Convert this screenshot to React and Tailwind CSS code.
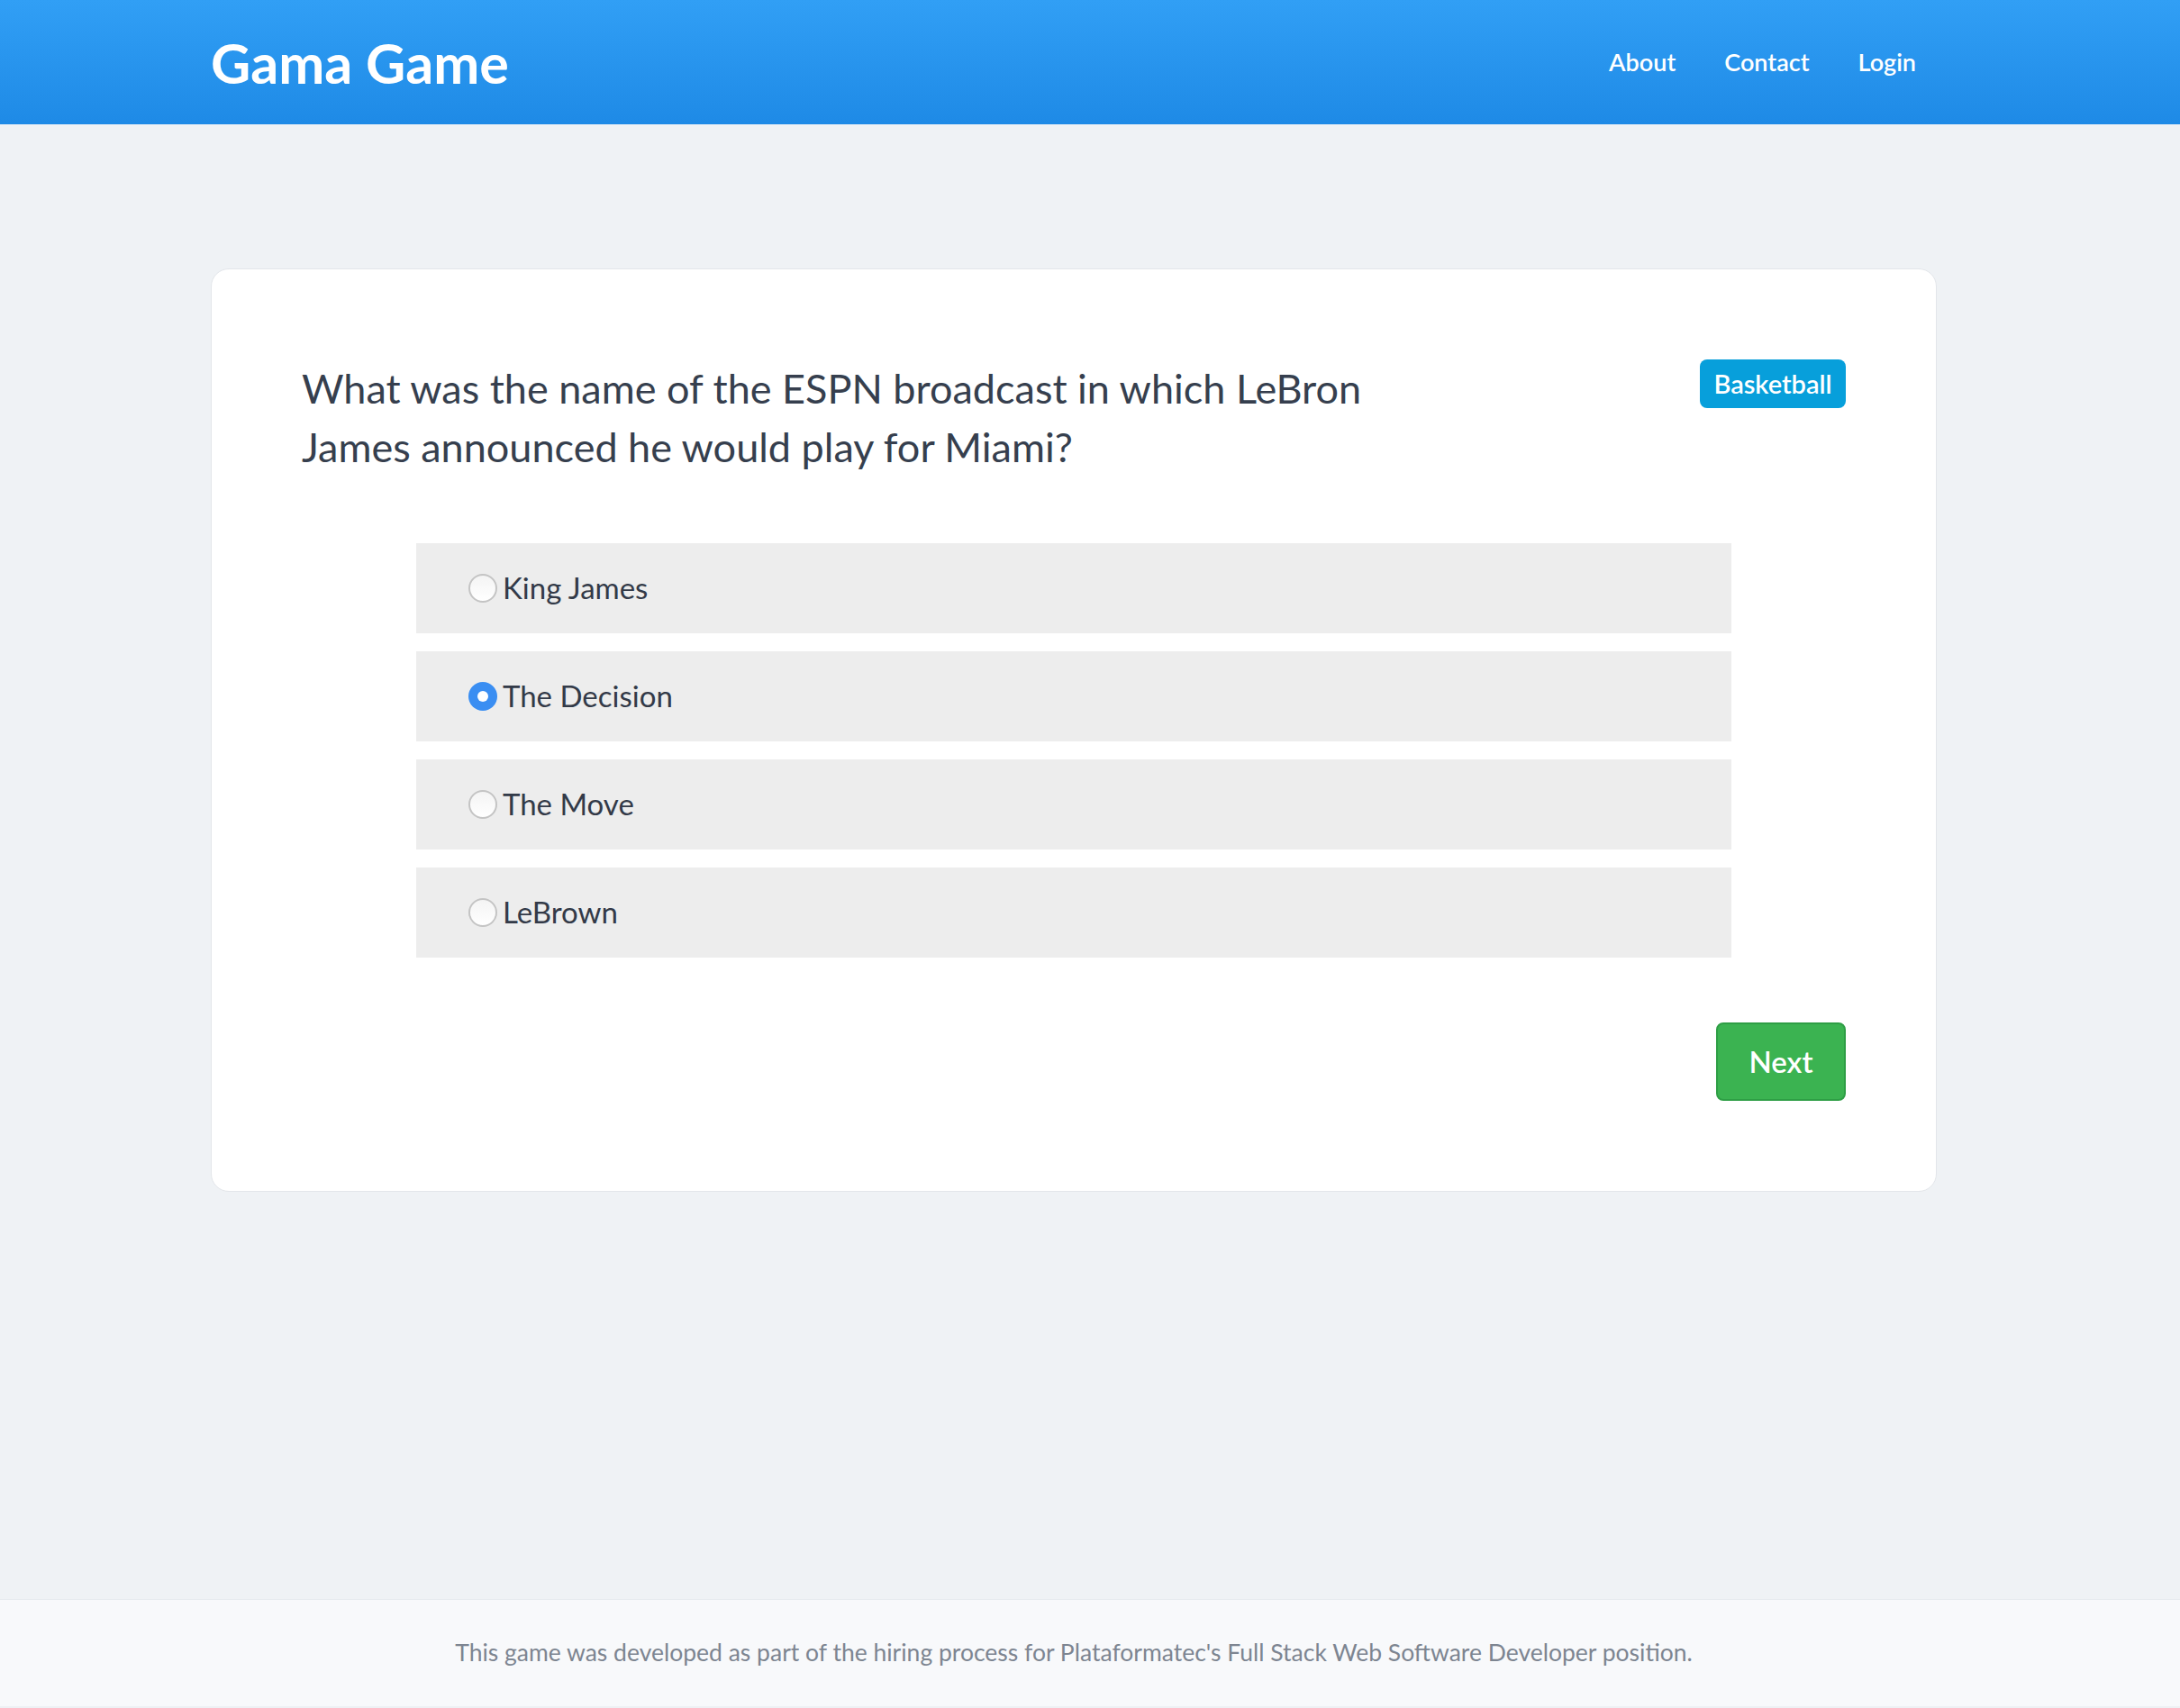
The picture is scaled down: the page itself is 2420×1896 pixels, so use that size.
import React from 'react';

const answers = ['King James', 'The Decision', 'The Move', 'LeBrown'];

const Radio = ({ checked }) =>
  checked ? (
    <span className="flex h-[32px] w-[32px] shrink-0 items-center justify-center rounded-full bg-[#3a8ef2]">
      <span className="h-[12px] w-[12px] rounded-full bg-white" />
    </span>
  ) : (
    <span className="h-[32px] w-[32px] shrink-0 rounded-full border-2 border-[#c4c4c4] bg-gradient-to-b from-[#f4f4f4] to-white" />
  );

const App = () => {
  const selected = 'The Decision';

  return (
    <div className="flex min-h-screen flex-col bg-[#eff2f5] font-['Lato','Noto_Sans',sans-serif]">
      <header className="h-[138px] bg-gradient-to-b from-[#319ff5] to-[#1e8ae6]">
        <div className="pr-[36px]">
          <div className="mx-auto flex h-[138px] w-[1916px] items-center justify-between">
            <a href="#" className="text-[61px] font-bold leading-none text-white">Gama Game</a>
            <nav className="flex items-center">
              <a href="#" className="px-[27px] text-[27px] font-semibold text-white">About</a>
              <a href="#" className="px-[27px] text-[27px] font-semibold text-white">Contact</a>
              <a href="#" className="pl-[27px] pr-[23px] text-[27px] font-semibold text-white">Login</a>
            </nav>
          </div>
        </div>
      </header>

      <main className="flex-1 pr-[36px] pt-[160px]">
        <div className="mx-auto w-[1916px] rounded-[20px] border border-[#e3e6ea] bg-white p-[100px]">
          <div className="flex items-start justify-between">
            <h3 className="text-[45px] leading-[65px] text-[#363f4e]">
              What was the name of the ESPN broadcast in which LeBron
              <br />
              James announced he would play for Miami?
            </h3>
            <span className="flex h-[54px] w-[162px] items-center justify-center rounded-[8px] bg-[#079fdb] text-[29px] font-semibold text-white">
              Basketball
            </span>
          </div>

          <div className="mx-auto mt-[74px] flex w-[1460px] flex-col gap-[20px]">
            {answers.map((a) => (
              <label key={a} className="flex h-[100px] items-center gap-[6px] bg-[#ededed] pl-[58px] text-[33px] text-[#333a48]">
                <Radio checked={a === selected} />
                <span>{a}</span>
              </label>
            ))}
          </div>

          <div className="mt-[72px] flex justify-end">
            <button className="flex h-[87px] w-[144px] items-center justify-center rounded-[8px] border-2 border-[#2e9e45] bg-[#3bb351] text-[33px] font-semibold text-white">
              Next
            </button>
          </div>
        </div>
      </main>

      <footer className="h-[121px] border-t border-[#e6eaee] border-b-2 border-b-[#eef1f4] bg-[#f8f9fb] pr-[36px]">
        <p className="flex h-full items-center justify-center text-[26.5px] text-[#7d8591]">
          This game was developed as part of the hiring process for Plataformatec's Full Stack Web Software Developer position.
        </p>
      </footer>
    </div>
  );
};

export default App;
